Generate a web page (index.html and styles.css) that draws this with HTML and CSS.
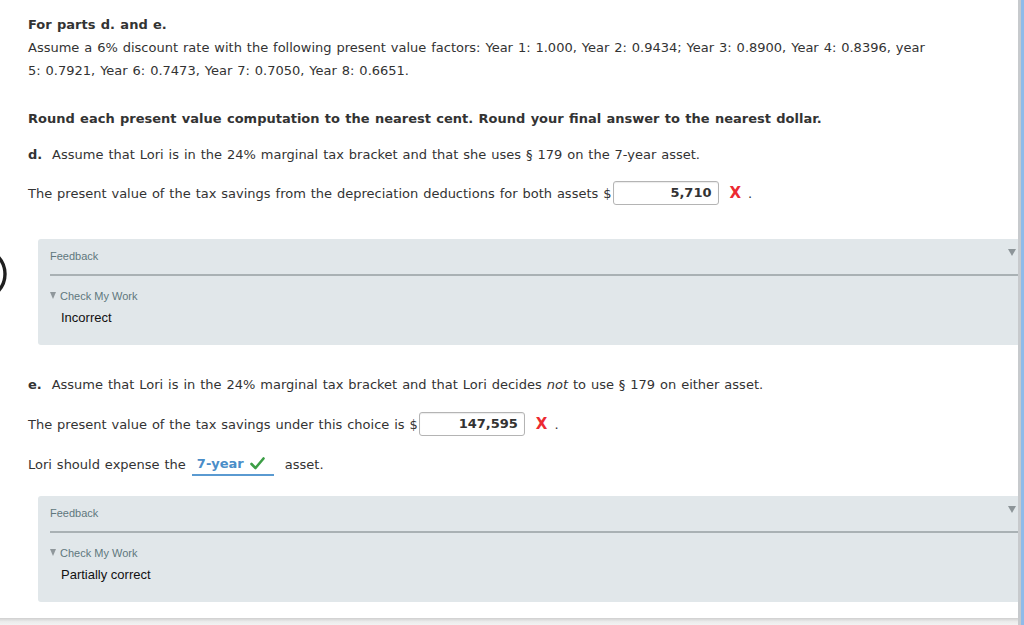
FILE: index.html
```html
<!DOCTYPE html>
<html>
<head>
<meta charset="utf-8">
<link rel="stylesheet" href="styles.css">
</head>
<body>
<div class="page">
  <div class="content">
    <svg class="arc" width="8" height="40" viewBox="0 0 8 40"><circle cx="-20" cy="20" r="25" fill="none" stroke="#1f1f1f" stroke-width="3.4"/></svg>
    <div class="intro">
      <p class="title">For parts d. and e.</p>
      <p class="para">Assume a 6% discount rate with the following present value factors: Year 1: 1.000, Year 2: 0.9434; Year 3: 0.8900, Year 4: 0.8396, year 5: 0.7921, Year 6: 0.7473, Year 7: 0.7050, Year 8: 0.6651.</p>
    </div>
    <p class="line bold round">Round each present value computation to the nearest cent. Round your final answer to the nearest dollar.</p>
    <p class="line part-d"><b>d.</b>&nbsp; Assume that Lori is in the 24% marginal tax bracket and that she uses § 179 on the 7-year asset.</p>
    <div class="line answer ans-d">The present value of the tax savings from the depreciation deductions for both assets $<span class="box">5,710</span><span class="xmark">X</span><span class="dot">.</span></div>

    <div class="panel panel-1">
      <div class="phead"><span class="plabel">Feedback</span><span class="tri"></span></div>
      <div class="pbody">
        <div class="cmw"><span class="smtri"></span>Check My Work</div>
        <div class="result">Incorrect</div>
      </div>
    </div>

    <p class="line part-e"><b>e.</b>&nbsp; Assume that Lori is in the 24% marginal tax bracket and that Lori decides <i>not</i> to use § 179 on either asset.</p>
    <div class="line answer ans-e">The present value of the tax savings under this choice is $<span class="box">147,595</span><span class="xmark">X</span><span class="dot">.</span></div>
    <div class="line answer ans-sel">Lori should expense the <span class="select"><span class="selval">7-year</span><svg class="check" width="15" height="13" viewBox="0 0 15 13"><path d="M1.5 7 L5.5 11 L13.5 1.5" fill="none" stroke="#3c9e46" stroke-width="2.6" stroke-linecap="round" stroke-linejoin="round"/></svg></span><span class="after">asset.</span></div>

    <div class="panel panel-2">
      <div class="phead"><span class="plabel">Feedback</span><span class="tri"></span></div>
      <div class="pbody">
        <div class="cmw"><span class="smtri"></span>Check My Work</div>
        <div class="result">Partially correct</div>
      </div>
    </div>
    <div class="hbar"></div>
  </div>
  <div class="edge"></div>
</div>
</body>
</html>
```

FILE: styles.css
```css
html, body {
  margin: 0;
  padding: 0;
  background: #fff;
}
body {
  font-family: "DejaVu Sans", Verdana, sans-serif;
  font-size: 13px;
  word-spacing: 0.8px;
  color: #333;
  overflow: hidden;
}
.page {
  display: flex;
  width: 1024px;
  height: 625px;
}
.content {
  width: 1018px;
  position: relative;
}
.edge {
  width: 3px;
  border-left: 3px solid #c7cacd;
  background: #8fbbea;
}
.arc {
  position: absolute;
  left: 0;
  top: 254px;
}
p { margin: 0; }
.intro {
  padding: 13px 0 0 28px;
  line-height: 23px;
  width: 912px;
}
.title { font-weight: bold; }
.line {
  margin-left: 28px;
  line-height: 23px;
}
.bold { font-weight: bold; }
.round { margin-top: 25px; }
.part-d { margin-top: 13px; }
.answer {
  display: flex;
  align-items: center;
  height: 24px;
}
.ans-d { margin-top: 15px; }
.box {
  display: inline-block;
  box-sizing: border-box;
  width: 106px;
  height: 24px;
  border: 1px solid #b4b4b4;
  border-radius: 3px;
  box-shadow: inset 0 1px 1px rgba(0,0,0,0.08);
  margin-left: 1px;
  padding-right: 6px;
  text-align: right;
  font-weight: bold;
  line-height: 22px;
}
.xmark {
  color: #ec2a31;
  font-weight: bold;
  font-size: 15px;
  margin-left: 11px;
}
.dot { margin-left: 7px; }
.panel {
  margin-left: 38px;
  background: #e1e7ea;
  border-radius: 3px 0 0 3px;
  padding: 10px 0 19px 0;
  font-family: "Liberation Sans", Arial, Helvetica, sans-serif;
  word-spacing: 0;
}
.panel-1 { margin-top: 34px; }
.phead {
  margin-left: 12px;
  display: flex;
  justify-content: space-between;
  align-items: flex-start;
  padding-bottom: 11px;
  border-bottom: 2px solid #a9b1b4;
}
.plabel {
  font-size: 11px;
  line-height: 14px;
  color: #5f777d;
}
.tri {
  width: 0;
  height: 0;
  border-left: 4px solid transparent;
  border-right: 4px solid transparent;
  border-top: 7px solid #8d9599;
  margin-top: 0;
  margin-right: 2px;
}
.pbody {
  padding: 13px 0 0 12px;
}
.cmw {
  font-size: 11px;
  line-height: 14px;
  color: #5f777d;
  display: flex;
  align-items: center;
}
.smtri {
  width: 0;
  height: 0;
  border-left: 3.5px solid transparent;
  border-right: 3.5px solid transparent;
  border-top: 7px solid #8f979b;
  margin-right: 4px;
  margin-top: -2px;
}
.result {
  margin-top: 7px;
  margin-left: 11px;
  font-size: 13px;
  line-height: 16px;
  color: #111;
}
.part-e { margin-top: 28px; }
.ans-e { margin-top: 16px; }
.ans-sel { margin-top: 16px; }
.select {
  display: inline-flex;
  align-items: center;
  box-sizing: border-box;
  width: 82px;
  height: 24px;
  margin-left: 6px;
  padding: 0 0 0 5px;
  border-bottom: 2px solid #5a9ad1;
}
.selval {
  color: #4a8dc8;
  font-weight: bold;
}
.check { margin-left: 6px; }
.after { margin-left: 11px; }
.panel-2 { margin-top: 20px; }
.hbar {
  margin-top: 16px;
  height: 9px;
  background: linear-gradient(#cfcfcf, #ececec 40%, #f6f6f6);
}
```
